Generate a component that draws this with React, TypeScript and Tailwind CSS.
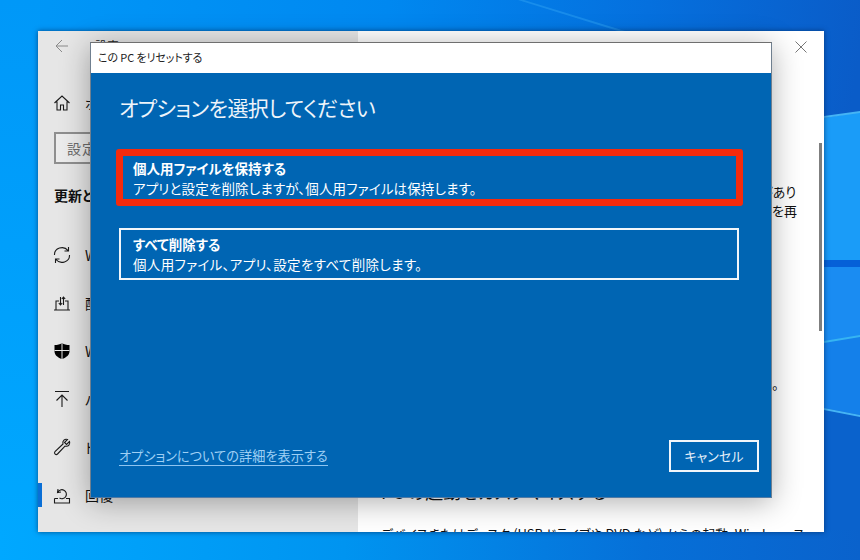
const FONT = "font-['Noto_Sans_CJK_JP','Noto_Sans',sans-serif] [font-feature-settings:'palt']";

function Wallpaper() {
  return (
    <svg className="absolute inset-0" width="860" height="560" viewBox="0 0 860 560">
      <defs>
        <linearGradient id="base" x1="0" y1="0" x2="1" y2="0.08">
          <stop offset="0" stopColor="#0098f8" />
          <stop offset="0.45" stopColor="#0088f0" />
          <stop offset="0.75" stopColor="#0570de" />
          <stop offset="1" stopColor="#0a5cc8" />
        </linearGradient>
        <linearGradient id="low" x1="0" y1="0" x2="1" y2="0">
          <stop offset="0" stopColor="#00a8ff" />
          <stop offset="0.4" stopColor="#0094f0" />
          <stop offset="0.75" stopColor="#0670d8" />
          <stop offset="1" stopColor="#0a62cc" />
        </linearGradient>
        <linearGradient id="left" x1="0" y1="0" x2="0" y2="1">
          <stop offset="0" stopColor="#0098f8" />
          <stop offset="1" stopColor="#00a8ff" />
        </linearGradient>
      </defs>
      <rect width="860" height="560" fill="url(#base)" />
      <rect width="40" height="560" fill="url(#left)" />
      <rect y="530" width="860" height="30" fill="url(#low)" />
      <polygon points="824,118 860,112 860,260 824,260" fill="#1a9cf8" />
      <polygon points="824,260 860,260 860,267 824,267" fill="#0560d8" />
      <polygon points="824,267 860,267 860,336 824,342" fill="#1a8cf2" />
      <polygon points="824,342 860,336 860,415 824,408" fill="#1480ea" />
      <polygon points="824,410 860,417 860,530 824,530" fill="#0a62cc" />
      <polygon points="824,116 860,111 860,113 824,118" fill="#45b4f5" />
      <polygon points="824,341 860,335 860,337 824,343" fill="#36b4f2" />
      <polygon points="824,408 860,415 860,417 824,410" fill="#45b4f5" />
      <polygon points="518,0 524,0 625,31 618,31" fill="#2a9cf0" opacity="0.55" />
    </svg>
  );
}

function NavIcon({ children }: { children: React.ReactNode }) {
  return (
    <svg width="18" height="18" viewBox="0 0 18 18" fill="none" stroke="#1a1a1a" strokeWidth="1.1">
      {children}
    </svg>
  );
}

function Row({ label, icon }: { label: string; icon: React.ReactNode }) {
  return (
    <div className="flex h-[48px] items-center gap-[14px] pl-[15px] text-[14px] text-[#111]">
      <span className="flex w-[18px] justify-center">{icon}</span>
      <span className="whitespace-nowrap">{label}</span>
    </div>
  );
}

function Sidebar() {
  return (
    <div className="flex w-[320px] shrink-0 flex-col bg-[#e6e6e6]">
      <div className="flex h-[29px] items-start gap-[26px] pl-[17px] pt-[8px]">
        <svg width="14" height="14" viewBox="0 0 14 14" fill="none" stroke="#8a8a8a" strokeWidth="1">
          <path d="M13 7H1M7 1 1 7l6 6" />
        </svg>
        <span className="text-[12px] leading-[14px] text-[#222]">設定</span>
      </div>
      <div className="mt-[31px] flex h-[24px] items-center gap-[14px] pl-[15px]">
        <NavIcon>
          <path d="M1.500 9 9 2l7.500 7M4 7.500V16h3.500v-5h3v5H14V7.500" />
        </NavIcon>
        <span className="text-[14px] text-[#111]">ホーム</span>
      </div>
      <div className="ml-[16px] mt-[17px] flex h-[32px] w-[280px] items-center border-2 border-[#8f8f8f] bg-[#ececec] pl-[11px] text-[14px] tracking-[1px] text-[#6b6b6b]">
        設定の検索
      </div>
      <div className="mt-[21px] pl-[16px] text-[14px] font-bold text-[#111]">更新とセキュリティ</div>
      <div className="mt-[25px] flex flex-col">
        <Row
          label="Windows Update"
          icon={
            <NavIcon>
              <path d="M1.500 9A7.500 7 0 0 1 15 4.500M16.500 9A7.500 7 0 0 1 3 13.500M15.500 1v4h-4M2.500 17v-4h4" />
            </NavIcon>
          }
        />
        <Row
          label="配信の最適化"
          icon={
            <NavIcon>
              <path d="M1 16h16M3 16V7h3M15 16V7h-3M7.500 3v8M5.800 9l1.700 2 1.700-2M10.500 11V3M8.800 5l1.700-2 1.700 2" />
            </NavIcon>
          }
        />
        <Row
          label="Windows セキュリティ"
          icon={
            <svg width="18" height="18" viewBox="0 0 18 18">
              <path d="M9 1c2 1.500 4.500 2 7.500 2v6c0 4-3 6.500-7.500 8-4.500-1.500-7.500-4-7.500-8V3C4.500 3 7 2.500 9 1Z" fill="#000" />
              <path d="M9 1v16M1.500 8.500h15" stroke="#e6e6e6" strokeWidth="1" />
            </svg>
          }
        />
        <Row
          label="バックアップ"
          icon={
            <NavIcon>
              <path d="M2 1.500h14M9 17V5M3.500 10.500 9 5l5.500 5.500" />
            </NavIcon>
          }
        />
        <Row
          label="トラブルシューティング"
          icon={
            <NavIcon>
              <path d="M16.500 3.500 13.500 6.500 11.500 4.500 14.500 1.500C12 .5 9 2.500 10 6L2 13.500c-1.500 2 1 4 2.500 2.500L12 8c3.500 1 5.500-2 4.500-4.500Z" />
            </NavIcon>
          }
        />
        <div className="relative">
          <div className="absolute left-0 top-[12px] h-[24px] w-[4px] bg-[#0a6fd6]" />
          <Row
            label="回復"
            icon={
              <NavIcon>
                <path d="M1.500 12.500H5M13 12.500h3.500V17h-15v-4.500M5 3l-.5 3.500L8 6M4.800 6.300A4.500 4.500 0 1 1 6.500 12" />
              </NavIcon>
            }
          />
        </div>
      </div>
    </div>
  );
}

function SettingsWindow() {
  return (
    <div className="absolute left-[38px] top-[31px] flex h-[501px] w-[786px] overflow-hidden bg-white shadow-[0_0_5px_rgba(0,40,90,0.7)]">
      <Sidebar />
      <div className="relative min-w-0 flex-1 bg-white text-[#111]">
        <div className="absolute left-[392px] top-[11px] h-px w-[10px] bg-[#333]" />
        <svg className="absolute left-[437px] top-[10px]" width="12" height="12" viewBox="0 0 12 12" stroke="#777" strokeWidth="1">
          <path d="M.5.5l11 11M11.500.5l-11 11" />
        </svg>
        <div className="absolute left-[402px] top-[151px] whitespace-nowrap text-[13px] leading-[20px]">があり</div>
        <div className="absolute left-[414px] top-[170px] whitespace-nowrap text-[13px] leading-[20px]">を再</div>
        <div className="absolute left-[402px] top-[343px] whitespace-nowrap text-[13px]">ん。</div>
        <div className="absolute left-[23px] top-[447px] whitespace-nowrap text-[18px]">PC の起動をカスタマイズする</div>
        <div className="absolute left-[23px] top-[493px] whitespace-nowrap text-[13px]">
          デバイスまたはディスク (USB ドライブや DVD など) からの起動、Windows ス
        </div>
        <div className="absolute right-[2px] top-[112px] h-[188px] w-[3px] bg-[#7f7f7f]" />
      </div>
    </div>
  );
}

function ResetDialog() {
  return (
    <div className="absolute left-[90px] top-[42px] flex h-[456px] w-[682px] flex-col border border-t-[#6f6f6f] border-r-[#6f7f8f] border-b-[#4f7aa5] border-l-[#6f7f8f] bg-[#0065b3] shadow-[0_4px_28px_rgba(0,0,0,0.32)]">
      <div className="flex h-[30px] shrink-0 items-center bg-white pb-[2px] pl-[7px] text-[11px] tracking-[-0.1px] text-[#222]">
        この PC をリセットする
      </div>
      <div className="flex flex-1 flex-col pl-[28px] pt-[18px] text-white">
        <h1 className="text-[21px] leading-[32px] tracking-[-0.55px] text-[#eef4fa]">
          オプションを選択してください
        </h1>
        <div className="relative mt-[29px] flex h-[51px] w-[620px] flex-col justify-center pl-[14px] text-[13.500px] leading-[20px]">
          <div className="absolute -bottom-[3px] -left-[3px] -right-[4px] -top-[3px] rounded-[3px] border-[7px] border-[#f42a0c]" />
          <div className="font-bold">個人用ファイルを保持する</div>
          <div className="tracking-[0.15px]">アプリと設定を削除しますが、個人用ファイルは保持します。</div>
        </div>
        <div className="mt-[25px] flex h-[52px] w-[620px] flex-col justify-center border-2 border-[#f2f6fa] pl-[12px] text-[13.500px] leading-[20px]">
          <div className="font-bold">すべて削除する</div>
          <div className="tracking-[0.35px]">個人用ファイル、アプリ、設定をすべて削除します。</div>
        </div>
        <div className="mt-auto flex items-end justify-between pb-[25px] pr-[12px]">
          <span className="mb-[6px] border-b border-[#8fc4f0] text-[13.200px] leading-[19px] text-[#9fd0f5]">
            オプションについての詳細を表示する
          </span>
          <div className="flex h-[32px] w-[90px] items-center justify-center border-2 border-[#f2f6fa] text-[13px] text-[#e6f0fa]">
            キャンセル
          </div>
        </div>
      </div>
    </div>
  );
}

export default function App() {
  return (
    <div className={`relative h-[560px] w-[860px] overflow-hidden ${FONT}`}>
      <Wallpaper />
      <SettingsWindow />
      <ResetDialog />
    </div>
  );
}
